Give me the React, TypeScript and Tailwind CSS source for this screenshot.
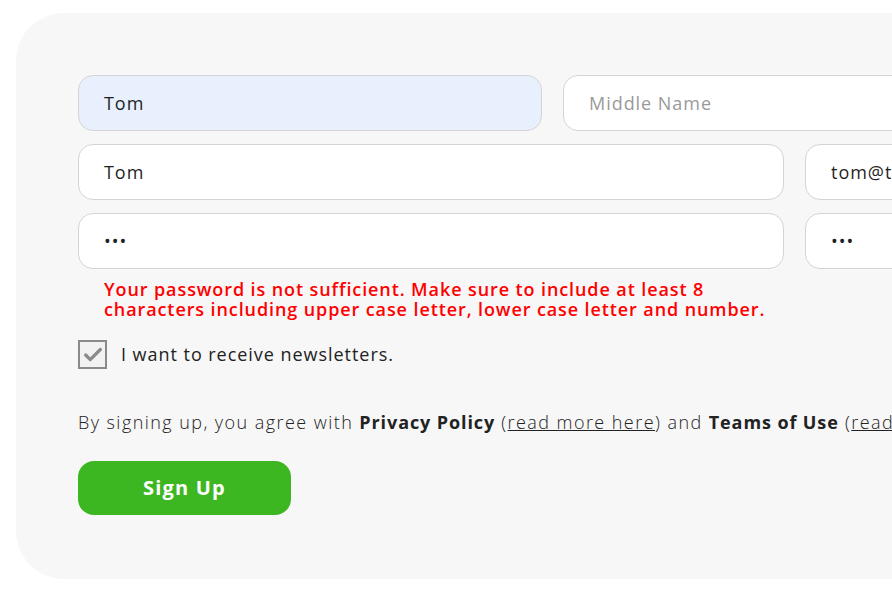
import { Check } from "lucide-react";

const font = { fontFamily: '"Open Sans", "DejaVu Sans", sans-serif' };

function Field({ value, placeholder, filled, className }: { value?: string; placeholder?: string; filled?: boolean; className: string }) {
  return (
    <div
      className={`h-[56px] shrink-0 rounded-[15px] border border-[#d4d4d4] flex items-center pl-[25px] text-[18px] overflow-hidden whitespace-nowrap ${
        filled ? "bg-[#e8f0fe]" : "bg-white"
      } ${className}`}
    >
      {value ? <span className="text-[#1f1f1f]">{value}</span> : <span className="text-[#9a9a9a]">{placeholder}</span>}
    </div>
  );
}

export default function App() {
  return (
    <div className="w-[892px] h-[594px] bg-white overflow-hidden pt-[13px] pl-[16px] tracking-[0.06em]" style={font}>
      <div className="w-[1200px] h-[566px] bg-[#f7f7f7] rounded-[48px] pt-[62px] pl-[62px]">
        <div className="flex flex-col gap-[13px]">
          <div className="flex gap-[21px]">
            <Field value="Tom" filled className="w-[464px]" />
            <Field placeholder="Middle Name" className="w-[464px]" />
          </div>
          <div className="flex gap-[21px]">
            <Field value="Tom" className="w-[706px]" />
            <Field value="tom@test.com" className="w-[464px]" />
          </div>
          <div className="flex gap-[21px]">
            <Field value="•••" className="w-[706px]" />
            <Field value="•••" className="w-[464px]" />
          </div>
        </div>

        <p className="mt-[10px] pl-[26px] text-[18px] leading-[20px] font-semibold text-[#ff0000] w-[706px] tracking-[0.05em]">
          Your password is not sufficient. Make sure to include at least 8 characters including upper case letter, lower case letter and number.
        </p>

        <label className="mt-[21px] flex items-center gap-[14px]">
          <span className="w-[29px] h-[29px] border-2 border-[#8a8a8a] bg-[#f2f2f2] flex items-center justify-center">
            <Check className="w-[22px] h-[22px] text-[#8a8a8a]" strokeWidth={3.5} />
          </span>
          <span className="text-[18px] text-[#222]">I want to receive newsletters.</span>
        </label>

        <p className="mt-[40px] text-[18px] font-light text-[#222] whitespace-nowrap tracking-[0.08em]">
          By signing up, you agree with <b className="font-bold tracking-[0.05em]">Privacy Policy</b> (
          <span className="underline">read more here</span>) and <b className="font-bold tracking-[0.05em]">Teams of Use</b> (
          <span className="underline">read more here</span>)
        </p>

        <button className="mt-[25px] w-[213px] h-[54px] rounded-[16px] bg-[#3cb721] text-white text-[20px] font-bold tracking-[0.06em]">
          Sign Up
        </button>
      </div>
    </div>
  );
}
